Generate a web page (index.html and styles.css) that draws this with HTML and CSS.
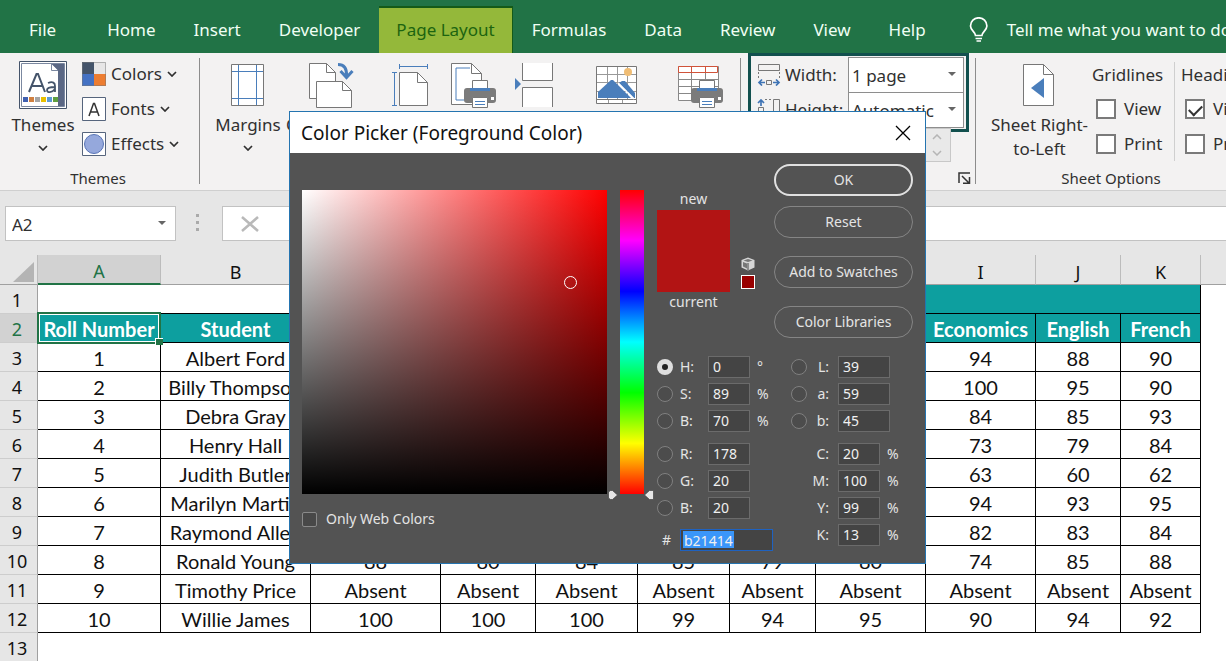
FILE: index.html
```html
<!DOCTYPE html>
<html lang="en">
<head>
<meta charset="utf-8">
<title>Workbook</title>
<link rel="stylesheet" href="styles.css">
</head>
<body>
<nav class="tabs">
  <button class="tab tab-file">File</button>
  <button class="tab">Home</button>
  <button class="tab">Insert</button>
  <button class="tab">Developer</button>
  <button class="tab tab-active">Page Layout</button>
  <button class="tab">Formulas</button>
  <button class="tab">Data</button>
  <button class="tab">Review</button>
  <button class="tab">View</button>
  <button class="tab">Help</button>
  <button class="tell">
    <svg width="20" height="26" viewBox="0 0 20 26" fill="none" stroke="#fff" stroke-width="1.7"><path d="M6.5 18.5c0-3.500-5-5-5-9.500a8.200 8.200 0 0 1 16.400 0c0 4.500-5 6-5 9.500zM6.500 21.500h6.500M7.500 24h4.500"/></svg>
    <span>Tell me what you want to do</span>
  </button>
</nav>

<section class="ribbon">
  <div class="group group-themes">
    <div class="group-body">
      <button class="big themes-btn">
        <svg width="48" height="48" viewBox="0 0 48 48"><path d="M.5.5h47v47H.5z" fill="#fff" stroke="#44546a"/><path d="M2.500 2.500h43v43h-43z" fill="#fff" stroke="#7b88a0"/><path d="M32 3h13v42h-6V10z" fill="#5a6784"/><path d="M32.500 3v6.500h6.500" fill="#fff" stroke="#7b88a0"/><path d="M10 31 17.500 13h1.500L26 31M13 25h11" fill="none" stroke="#44546a" stroke-width="2"/><path d="M29 22c5-2 7 0 7 3v6m0-5c-5 0-8 .5-8 3 0 3 5 3 8-1" fill="none" stroke="#44546a" stroke-width="1.800"/><path d="M4 36h5v5H4z" fill="#4060b0"/><path d="M10 36h5v5h-5z" fill="#d08040"/><path d="M16 36h5v5h-5z" fill="#a5a5a5"/><path d="M22 36h5v5h-5z" fill="#e8c000"/><path d="M28 36h5v5h-5z" fill="#5b9bd5"/><path d="M34 36h5v5h-5z" fill="#60a040"/></svg>
        <span>Themes</span>
        <svg class="chev" width="10" height="6" viewBox="0 0 10 6"><path d="M1 1l4 4 4-4"/></svg>
      </button>
      <div class="stack">
        <button class="small"><svg width="24" height="24" viewBox="0 0 24 24"><path d="M0 0h12v12H0z" fill="#44546a"/><path d="M12 0h12v12H12z" fill="#e7e6e6"/><path d="M0 12h12v12H0z" fill="#4472c4"/><path d="M12 12h12v12H12z" fill="#ed7d31"/><path d="M.5.5h23v23H.5z" fill="none" stroke="#777" stroke-opacity=".5"/></svg><span>Colors</span><svg class="chev" width="10" height="6" viewBox="0 0 10 6"><path d="M1 1l4 4 4-4"/></svg></button>
        <button class="small"><svg width="24" height="24" viewBox="0 0 24 24"><path d="M.5.5h23v23H.5z" fill="#fff" stroke="#56657d"/><path d="M7 19 11.500 6.500h1L17 19M8.500 15h7" fill="none" stroke="#333" stroke-width="1.500"/></svg><span>Fonts</span><svg class="chev" width="10" height="6" viewBox="0 0 10 6"><path d="M1 1l4 4 4-4"/></svg></button>
        <button class="small"><svg width="24" height="24" viewBox="0 0 24 24"><path d="M.5.5h23v23H.5z" fill="#fff" stroke="#56657d"/><circle cx="12" cy="12" r="9.500" fill="#95a8dc" stroke="#5874b5"/></svg><span>Effects</span><svg class="chev" width="10" height="6" viewBox="0 0 10 6"><path d="M1 1l4 4 4-4"/></svg></button>
      </div>
    </div>
    <div class="group-name">Themes</div>
  </div>

  <div class="group group-setup">
    <div class="setup-row">
      <button class="big w84">
        <svg width="34" height="44" viewBox="0 0 34 44" fill="none"><path d="M.5.5h32v41H.5z" fill="#fff" stroke="#777"/><path d="M7.500 1v40M25.500 1v40M1 7.500h31M1 34.500h31" stroke="#4a7ebb"/></svg>
        <span>Margins</span><svg class="chev" width="10" height="6" viewBox="0 0 10 6"><path d="M1 1l4 4 4-4"/></svg>
      </button>
      <button class="big w84">
        <svg width="46" height="46" viewBox="0 0 46 46"><path d="M.5.500h17l9 9v26H.5z" fill="#fff" stroke="#777"/><path d="M17.500.500v9h9" fill="none" stroke="#777"/><path d="M7.500 18.500h26l9 9v17h-35z" fill="#fff" stroke="#777"/><path d="M33.500 18.500v9h9" fill="none" stroke="#777"/><path d="M29 1.500q9 0 8.500 11M31.500 8l6 6.500 6-6.500" fill="none" stroke="#4a7ebb" stroke-width="3"/></svg>
        <span>Orientation</span>
      </button>
      <button class="big w74" aria-label="Size">
        <svg width="38" height="44" viewBox="0 0 38 44"><path d="M7.500 8.500h18l10 10v23h-28z" fill="#fff" stroke="#777"/><path d="M25.500 8.500v10h10" fill="none" stroke="#777"/><path d="M7.500 2.500h28M7.500 0v5M35.500 0v5M2.500 8v33M0 8.500h5M0 41.500h5" stroke="#4a7ebb"/></svg>
      </button>
      <button class="big w52" aria-label="Print Area">
        <svg width="46" height="46" viewBox="0 0 46 46"><path d="M.5.500h20l10 10v31H.5z" fill="#fff" stroke="#777"/><path d="M20.500.500v10h10" fill="none" stroke="#777"/><path d="M19 5H5v32h8" fill="none" stroke="#4a7ebb"/><path d="M16 25h26q3 0 3 3v9q0 3-3 3H16q-3 0-3-3v-9q0-3 3-3z" fill="#7b7b7b"/><path d="M21.500 17.500h15v8h-15z" fill="#fff" stroke="#777"/><path d="M19 25h20v3H19z" fill="#4a7ebb"/><path d="M40 34h3v3h-3z" fill="#fff"/><path d="M21.500 34.500h15v10h-15z" fill="#fff" stroke="#777"/><path d="M24 38.500h10M24 41.500h10" stroke="#4a7ebb"/></svg>
      </button>
      <button class="big w68" aria-label="Breaks">
        <svg width="40" height="46" viewBox="0 0 40 46"><path d="M8.500 0v17.500h30V0M8.500 44V24.500h30V44" fill="#fff" stroke="#777"/><path d="M1 15l6 6-6 6z" fill="#4a7ebb"/></svg>
      </button>
      <button class="big w98" aria-label="Background">
        <svg width="42" height="42" viewBox="0 0 42 42"><path d="M.5 1.500h40v33H.5zM.5 34.500h40v4H.5z" fill="#fff" stroke="#777"/><path d="M11.500 2v32M21.500 2v32M31.500 2v32M1 9.500h39M1 17.500h39M1 26.500h39M12.500 35v3M26.500 35v3" fill="none" stroke="#999"/><circle cx="32" cy="7" r="4" fill="#f0bd74"/><path d="M2 33v-6L15 15h2l18 18z" fill="#4a7ebb"/><path d="M23 18l3-2h3l10 12v5h-1z" fill="#4a7ebb"/><path d="M22 18l16 16" stroke="#fff" stroke-width="1.500"/></svg>
      </button>
      <button class="big w70" aria-label="Print Titles">
        <svg width="46" height="46" viewBox="0 0 46 46"><path d="M.5 3.500h40v34H.5z" fill="#fff" stroke="#888"/><path d="M13.500 10v27M27.500 10v27M1 16.500h39M1 23.500h39M1 30.500h39" fill="none" stroke="#888"/><path d="M.5 3.500h39v6H.5zM13.500 4v6M27.500 4v6" fill="#fff" stroke="#d0533a"/><path d="M16 25h26q3 0 3 3v9q0 3-3 3H16q-3 0-3-3v-9q0-3 3-3z" fill="#7b7b7b"/><path d="M21.500 17.500h15v8h-15z" fill="#fff" stroke="#777"/><path d="M19 25h20v3H19z" fill="#4a7ebb"/><path d="M40 34h3v3h-3z" fill="#fff"/><path d="M21.500 34.500h15v10h-15z" fill="#fff" stroke="#777"/><path d="M24 38.500h10M24 41.500h10" stroke="#4a7ebb"/></svg>
      </button>
    </div>
  </div>

  <div class="group group-scale">
    <div class="scale-box">
      <div class="scale-row">
        <svg width="24" height="22" viewBox="0 0 24 22" fill="none"><path d="M1.500.500h21v6h-21z" stroke="#777"/><path d="M1.500 8v6M22.500 8v6" stroke="#777" stroke-dasharray="2 2"/><path d="M9.500 16.500h5v4h-5z" stroke="#777"/><path d="M8 18.500H2M5 15.500l-3 3 3 3M16 18.500h6M19 15.500l3 3-3 3" stroke="#3f74b5" stroke-width="1.700"/></svg>
        <label for="pw">Width:</label>
        <span class="combo"><select id="pw"><option>1 page</option></select></span>
      </div>
      <div class="scale-row">
        <svg width="24" height="22" viewBox="0 0 24 22" fill="none"><path d="M16.500.500h6v21h-6z" stroke="#777"/><path d="M8 .500h7M8 21.500h7" stroke="#777" stroke-dasharray="2 2"/><path d="M1.500 8.500h5v5h-5z" stroke="#777"/><path d="M4 7V1M1 4l3-3 3 3M4 15v6M1 18l3 3 3-3" stroke="#3f74b5" stroke-width="1.700"/></svg>
        <label for="ph">Height:</label>
        <span class="combo"><select id="ph"><option>Automatic</option></select></span>
      </div>
    </div>
    <button class="spinner" aria-label="Scale"><svg width="10" height="22" viewBox="0 0 10 22" fill="none" stroke="#b5b5b5" stroke-width="1.500"><path d="M1 5l4-4 4 4M1 17l4 4 4-4"/></svg></button>
    <button class="launcher" aria-label="Page Setup"><svg width="13" height="12" viewBox="0 0 13 12" fill="none" stroke="#333" stroke-width="1.500"><path d="M1 11V1h11M4 4l7 7M11.500 5v6.200H5"/></svg></button>
  </div>

  <div class="group group-sheet">
    <div class="sheet-body">
      <button class="big rtl">
        <svg width="32" height="44" viewBox="0 0 32 44"><path d="M.5.500h20l10 10v31H.5z" fill="#fff" stroke="#777"/><path d="M20.500.500v10h10" fill="none" stroke="#777"/><path d="M8 24 21 14v20z" fill="#4a7ebb"/></svg>
        <span>Sheet Right-<br>to-Left</span>
      </button>
      <div class="checks">
        <div>Gridlines</div>
        <label><input type="checkbox">View</label>
        <label><input type="checkbox">Print</label>
      </div>
      <div class="checks checks-head">
        <div>Headings</div>
        <label><input type="checkbox" checked>View</label>
        <label><input type="checkbox">Print</label>
      </div>
    </div>
    <div class="group-name">Sheet Options</div>
  </div>
</section>

<section class="formula">
  <div class="namebox"><input value="A2" aria-label="Name box"></div>
  <svg class="dots" width="4" height="18" viewBox="0 0 4 18" fill="#aaa"><path d="M0 0h3v3H0zM0 7h3v3H0zM0 14h3v3H0z"/></svg>
  <div class="formula-box"><svg width="18" height="16" viewBox="0 0 18 16" fill="none" stroke="#b9b9b9" stroke-width="2.500"><path d="M1 1l16 14M17 1L1 15"/></svg></div>
</section>

<table class="sheet">
  <colgroup><col class="c0"><col class="cA"><col class="cB"><col class="cC"><col class="cD"><col class="cE"><col class="cF"><col class="cG"><col class="cH"><col class="cI"><col class="cJ"><col class="cK"><col></colgroup>
  <thead><tr><th class="corner"><svg width="21" height="20" viewBox="0 0 21 20"><path d="M21 0v20H0z" fill="#b4b4b4"/></svg></th><th class="on">A</th><th>B</th><th></th><th></th><th></th><th></th><th></th><th></th><th>I</th><th>J</th><th>K</th><th></th></tr></thead>
  <tbody>
    <tr class="top"><th>1</th><td colspan="2"></td><td class="banner" colspan="9"></td><td class="out"></td></tr>
    <tr class="heads"><th class="on">2</th><td class="sel">Roll Number</td><td>Student</td><td></td><td></td><td></td><td></td><td></td><td></td><td>Economics</td><td>English</td><td>French</td><td class="out"></td></tr>
    <tr><th>3</th><td>1</td><td>Albert Ford</td><td></td><td></td><td></td><td></td><td></td><td></td><td>94</td><td>88</td><td>90</td><td class="out"></td></tr>
    <tr><th>4</th><td>2</td><td>Billy Thompson</td><td></td><td></td><td></td><td></td><td></td><td></td><td>100</td><td>95</td><td>90</td><td class="out"></td></tr>
    <tr><th>5</th><td>3</td><td>Debra Gray</td><td></td><td></td><td></td><td></td><td></td><td></td><td>84</td><td>85</td><td>93</td><td class="out"></td></tr>
    <tr><th>6</th><td>4</td><td>Henry Hall</td><td></td><td></td><td></td><td></td><td></td><td></td><td>73</td><td>79</td><td>84</td><td class="out"></td></tr>
    <tr><th>7</th><td>5</td><td>Judith Butler</td><td></td><td></td><td></td><td></td><td></td><td></td><td>63</td><td>60</td><td>62</td><td class="out"></td></tr>
    <tr><th>8</th><td>6</td><td>Marilyn Martin</td><td></td><td></td><td></td><td></td><td></td><td></td><td>94</td><td>93</td><td>95</td><td class="out"></td></tr>
    <tr><th>9</th><td>7</td><td>Raymond Allen</td><td></td><td></td><td></td><td></td><td></td><td></td><td>82</td><td>83</td><td>84</td><td class="out"></td></tr>
    <tr><th>10</th><td>8</td><td>Ronald Young</td><td>88</td><td>80</td><td>84</td><td>85</td><td>79</td><td>80</td><td>74</td><td>85</td><td>88</td><td class="out"></td></tr>
    <tr><th>11</th><td>9</td><td>Timothy Price</td><td>Absent</td><td>Absent</td><td>Absent</td><td>Absent</td><td>Absent</td><td>Absent</td><td>Absent</td><td>Absent</td><td>Absent</td><td class="out"></td></tr>
    <tr><th>12</th><td>10</td><td>Willie James</td><td>100</td><td>100</td><td>100</td><td>99</td><td>94</td><td>95</td><td>90</td><td>94</td><td>92</td><td class="out"></td></tr>
    <tr><th>13</th><td class="out" colspan="12"></td></tr>
  </tbody>
</table>

<div class="dialog" role="dialog" aria-labelledby="dlg-title">
  <header class="dlg-head">
    <span id="dlg-title">Color Picker (Foreground Color)</span>
    <button class="close" aria-label="Close"><svg width="16" height="16" viewBox="0 0 16 16" fill="none" stroke="#000" stroke-width="1.300"><path d="M1 1l14 14M15 1L1 15"/></svg></button>
  </header>
  <div class="dlg-body">
    <div class="field-col">
      <div class="field"><span class="ring"></span></div>
      <label class="web"><input type="checkbox">Only Web Colors</label>
    </div>
    <div class="hue">
      <svg class="arrow arrow-l" width="10" height="10" viewBox="0 0 10 10"><path d="M2.500.500h2L9.500 5l-5 4.500h-2L.5 8V2z" fill="#e6e6e6" stroke="#444" stroke-width=".7"/></svg>
      <svg class="arrow arrow-r" width="10" height="10" viewBox="0 0 10 10"><path d="M9.500.500h-4L.5 5l5 4.500h4z" fill="#e6e6e6" stroke="#444" stroke-width=".7"/></svg>
    </div>
    <div class="right">
      <div class="right-top">
        <div class="swatch-col"><span>new</span><div class="swatch"></div><span>current</span></div>
        <div class="warn">
          <svg width="14" height="14" viewBox="0 0 14 14"><path d="M7 .5 13.500 3v7.500L7 13.500.5 10.500V3z" fill="#d6d6d6"/><path d="M2.500 3.500 7 5l4.500-1.500L7 2zM2 5v4.500L6 11.500V6.500z" fill="#777"/><path d="M7 6v7" stroke="#444"/></svg>
          <div class="mini"></div>
        </div>
        <div class="buttons">
          <button class="ok">OK</button>
          <button class="reset">Reset</button>
          <button>Add to Swatches</button>
          <button>Color Libraries</button>
        </div>
      </div>
      <div class="values">
        <div class="col-l">
          <div class="row"><input type="radio" name="ch" id="rh" checked><label for="rh">H:</label><input class="num" value="0" aria-label="H"><span>°</span></div>
          <div class="row"><input type="radio" name="ch" id="rs"><label for="rs">S:</label><input class="num" value="89" aria-label="S"><span>%</span></div>
          <div class="row"><input type="radio" name="ch" id="rb"><label for="rb">B:</label><input class="num" value="70" aria-label="Brightness"><span>%</span></div>
          <div class="row second"><input type="radio" name="ch" id="rr"><label for="rr">R:</label><input class="num" value="178" aria-label="R"></div>
          <div class="row"><input type="radio" name="ch" id="rg"><label for="rg">G:</label><input class="num" value="20" aria-label="G"></div>
          <div class="row"><input type="radio" name="ch" id="rbl"><label for="rbl">B:</label><input class="num" value="20" aria-label="Blue"></div>
          <div class="hex"><label for="hex">#</label><input id="hex" class="num" value="b21414"></div>
        </div>
        <div class="col-r">
          <div class="row"><input type="radio" name="ch" id="rl"><label for="rl">L:</label><input class="num wide" value="39" aria-label="L"></div>
          <div class="row"><input type="radio" name="ch" id="ra"><label for="ra">a:</label><input class="num wide" value="59" aria-label="a"></div>
          <div class="row"><input type="radio" name="ch" id="rbb"><label for="rbb">b:</label><input class="num wide" value="45" aria-label="b"></div>
          <div class="row second"><i></i><label for="c">C:</label><input class="num" id="c" value="20"><span>%</span></div>
          <div class="row"><i></i><label for="m">M:</label><input class="num" id="m" value="100"><span>%</span></div>
          <div class="row"><i></i><label for="y">Y:</label><input class="num" id="y" value="99"><span>%</span></div>
          <div class="row"><i></i><label for="k">K:</label><input class="num" id="k" value="13"><span>%</span></div>
        </div>
      </div>
    </div>
  </div>
</div>
</body>
</html>
```

FILE: styles.css
```css
* { box-sizing: border-box; }
body {
  margin: 0;
  min-height: 100vh;
  position: relative;
  overflow: hidden;
  background: #fff;
  color: #303030;
  font: 17px/24px "Noto Sans", "Open Sans", sans-serif;
}
button {
  border: 0;
  padding: 0;
  background: none;
  color: inherit;
  font: inherit;
}
svg { display: block; flex: none; }
input, select { font: inherit; color: inherit; margin: 0; }

/* tabs */
.tabs {
  display: flex;
  height: 53px;
  padding-top: 6px;
  background: #217346;
  color: #f0fff4;
  white-space: nowrap;
}
.tab { flex: none; padding: 0 19px; }
.tab-file { padding: 0 32px 0 29px; }
.tab-active {
  padding: 0 17px 2px;
  background: #94b83a;
  border-top: 2px solid #145a18;
  border-right: 1px solid #145a18;
  color: #1c6410;
}
.tell { display: flex; align-items: center; gap: 18px; padding-left: 24px; flex: none; }

/* ribbon */
.ribbon {
  display: flex;
  height: 138px;
  background: #f3f2f2;
  border-bottom: 1px solid #cfcfcf;
}
.group {
  position: relative;
  flex: none;
  display: flex;
  flex-direction: column;
  justify-content: space-between;
}
.group::after {
  content: "";
  position: absolute;
  right: 0;
  top: 5px;
  bottom: 6px;
  border-right: 1px solid #8c8c8c;
}
.group-name { font-size: 15px; line-height: 24px; text-align: center; }
.group-themes { width: 200px; }
.group-themes .group-name { padding-right: 4px; }
.group-setup { width: 541px; }
.group-scale { width: 235px; }
.group-sheet { width: 270px; }
.group-body { display: flex; gap: 8px; padding: 8px 0 0 12px; }
.big { display: flex; flex-direction: column; align-items: center; white-space: nowrap; }
.big > svg:first-child { height: 48px; }
.big > span { margin-top: 4px; }
.chev { fill: none; stroke: #303030; stroke-width: 1.7; }
.big .chev { margin-top: 8px; }
.themes-btn { width: 62px; }
.stack { display: flex; flex-direction: column; gap: 11px; padding-top: 1px; }
.small { display: flex; align-items: center; gap: 5px; height: 24px; }
.setup-row { display: flex; padding: 9px 0 0 6px; }
.setup-row .big > span { margin-top: 3px; }
.w52 { width: 52px; }
.w68 { width: 68px; }
.w70 { width: 70px; }
.w74 { width: 74px; }
.w84 { width: 84px; }
.w98 { width: 98px; }

.scale-box {
  margin: 0 7px;
  padding: 1px 2px 2px 6px;
  border: 3px solid #12504e;
}
.scale-row { display: grid; grid-template-columns: 24px 1fr 116px; column-gap: 4px; align-items: center; height: 35px; }
.combo { position: relative; display: block; height: 35px; }
.combo select {
  appearance: none;
  width: 100%;
  height: 36px;
  padding: 2px 3px 0;
  border: 1px solid #8e8e8e;
  border-radius: 0;
  background: #fff;
}
.combo::after, .namebox::after {
  content: "";
  position: absolute;
  right: 8px;
  top: 15px;
  border: 4px solid transparent;
  border-top: 4px solid #666;
  border-bottom: 0;
}
.namebox::after { right: 10px; }
.spinner {
  position: absolute;
  right: 25px;
  bottom: 28px;
  width: 36px;
  height: 34px;
  border: 1px solid #c8c8c8;
  background: #e9e9e9;
  display: flex;
  align-items: center;
  justify-content: flex-end;
  padding-right: 8px;
}
.launcher { position: absolute; right: 5px; bottom: 6px; }

.sheet-body { display: flex; padding: 9px 0 0 1px; }
.sheet-body .big > span { margin-top: 3px; }
.rtl { width: 128px; }
.checks { width: 72px; margin-left: -10px; display: flex; flex-direction: column; gap: 11px; white-space: nowrap; padding-top: 2px; }
.checks > div { height: 22px; line-height: 22px; }
.rtl + .checks { width: 84px; }
.checks label { display: flex; align-items: center; gap: 8px; height: 24px; padding-left: 4px; }
.checks input {
  appearance: none;
  width: 20px;
  height: 20px;
  border: 2px solid #7a7a7a;
  background: #fff;
  display: grid;
  place-items: center;
  flex: none;
}
.checks input:checked::after {
  content: "";
  width: 11px;
  height: 6px;
  border: solid #333;
  border-width: 0 0 2px 2px;
  transform: rotate(-45deg);
}
.checks-head { margin: 0; border-left: 1px solid #cfcfcf; padding-left: 6px; }

/* formula bar */
.formula {
  display: flex;
  align-items: center;
  height: 64px;
  padding: 0 0 0 5px;
  background: #e6e6e6;
}
.namebox { position: relative; width: 171px; }
.namebox input { display: block; width: 100%; height: 35px; padding: 2px 6px 0; border: 1px solid #c2c2c2; background: #fff; }
.dots { margin: 0 22px 0 20px; }
.formula-box { flex: 1; height: 35px; padding: 9px 18px; border: 1px solid #c2c2c2; border-right: 0; background: #fff; }

/* sheet */
.sheet {
  width: 100%;
  table-layout: fixed;
  border-collapse: separate;
  border-spacing: 0;
  color: #111;
}
.c0 { width: 38px; }
.cA { width: 123px; }
.cB { width: 150px; }
.cC { width: 130px; }
.cD { width: 95px; }
.cE { width: 102px; }
.cF { width: 92px; }
.cG { width: 86px; }
.cH, .cI { width: 110px; }
.cJ { width: 85px; }
.cK { width: 80px; }
.sheet th, .sheet td { height: 29px; padding: 0; text-align: center; white-space: nowrap; line-height: 24px; }
.sheet td { padding-top: 2px; }
.sheet th { font-weight: 400; font-size: 18px; background: #e6e6e6; }
.sheet thead th { height: 30px; border-right: 1px solid #bcbcbc; border-bottom: 1px solid #a0a0a0; padding-top: 4px; }
.sheet thead th:last-child { border-right: 0; }
.sheet tbody th { border-right: 1px solid #a0a0a0; border-bottom: 1px solid #cdcdcd; padding: 2px 3px 0 0; }
.sheet th.on { background: #d2d2d2; color: #217346; }
.sheet thead th.on { border-bottom: 2px solid #217346; }
.sheet .corner svg { margin-left: 13px; }
.sheet td {
  font-family: Lato, "Noto Sans", sans-serif;
  font-size: 20px;
  border-right: 1px solid #000;
  border-bottom: 1px solid #000;
  background: #fff;
}
.sheet .top td:nth-child(2) { border-right: 0; }
.sheet .heads td, .sheet td.banner { background: #0d9f9f; color: #fff; font-weight: 700; }
.sheet td.out { border: 0; background: #fff; }
.sheet td.sel { position: relative; }
.sel::before {
  content: "";
  position: absolute;
  inset: -2px -1px -2px -1px;
  border: 2px solid #217346;
  outline: 1px solid #fff;
  outline-offset: -3px;
}
.sel::after {
  content: "";
  position: absolute;
  right: -3px;
  bottom: -3px;
  width: 7px;
  height: 6px;
  background: #217346;
  border: solid #fff;
  border-width: 1px 0 0 1px;
}

/* dialog */
.dialog {
  position: absolute;
  left: 289px;
  top: 111px;
  width: 637px;
  border: 1px solid #2474b0;
  background: #535353;
  color: #e4e4e4;
  font-size: 14px;
  line-height: 20px;
}
.dlg-head {
  display: flex;
  align-items: center;
  justify-content: space-between;
  height: 41px;
  padding: 0 14px 0 11px;
  background: #fff;
  color: #111;
  font-size: 19px;
}
.dlg-body { display: flex; padding: 11px 12px 12px; gap: 13px; }
.field-col { width: 305px; padding-top: 26px; }
.field {
  position: relative;
  height: 304px;
  background: linear-gradient(to bottom, transparent, #000), linear-gradient(to right, #fff, #f00);
}
.ring {
  position: absolute;
  left: 262px;
  top: 86px;
  width: 13px;
  height: 13px;
  border: 1px solid #fff;
  border-radius: 50%;
}
.web { display: flex; align-items: center; gap: 9px; margin-top: 15px; }
.web input { appearance: none; width: 15px; height: 15px; border: 1px solid #8a8a8a; border-radius: 2px; background: #484848; }
.hue {
  position: relative;
  width: 24px;
  height: 304px;
  margin-top: 26px;
  background: linear-gradient(#f00, #f0f, #00f, #0ff, #0f0, #ff0, #f00);
}
.arrow { position: absolute; bottom: -6px; }
.arrow-l { left: -12px; }
.arrow-r { right: -10px; }
.right { flex: 1; }
.right-top { display: flex; }
.swatch-col { width: 73px; padding-top: 25px; text-align: center; }
.swatch { height: 82px; background: #b21414; }
.swatch-col span { display: block; padding-bottom: 1px; }
.warn { padding: 93px 19px 0 11px; }
.mini { width: 14px; height: 14px; margin-top: 4px; border: 1px solid #fff; background: #980000; }
.buttons { flex: 1; display: flex; flex-direction: column; gap: 18px; }
.buttons button { height: 32px; border: 1px solid #858585; border-radius: 16px; }
.buttons .ok { border: 2px solid #e0e0e0; }
.buttons .reset { margin-top: -8px; }
.values { display: flex; gap: 18px; padding-top: 15px; }
.col-l { width: 116px; }
.col-r { flex: 1; }
.row { display: grid; align-items: center; height: 27px; }
.col-l .row { grid-template-columns: 23px 28px 42px 1fr; }
.col-r .row { grid-template-columns: 19px 28px auto 1fr; }
.col-r .row label { text-align: right; padding-right: 9px; }
.row.second { margin-top: 6px; }
.row span { padding-left: 7px; }
.row input[type="radio"] { appearance: none; width: 16px; height: 16px; border: 1px solid #808080; border-radius: 50%; background: #4c4c4c; }
.row input[type="radio"]:checked { border: 5px solid #dedede; background: #222; }
.num { width: 42px; height: 22px; padding: 0 4px; border: 1px solid #6b6b6b; background: #444; color: #f0f0f0; }
.num.wide { width: 52px; }
.hex { display: flex; align-items: center; gap: 8px; margin-top: 8px; padding-left: 5px; }
.hex label { width: 10px; }
.hex .num {
  width: 93px;
  padding: 0 3px;
  border-color: #1f62c0;
  background: linear-gradient(#3a96fa, #3a96fa) 2px 1px / 51px 17px no-repeat #444;
}
```
